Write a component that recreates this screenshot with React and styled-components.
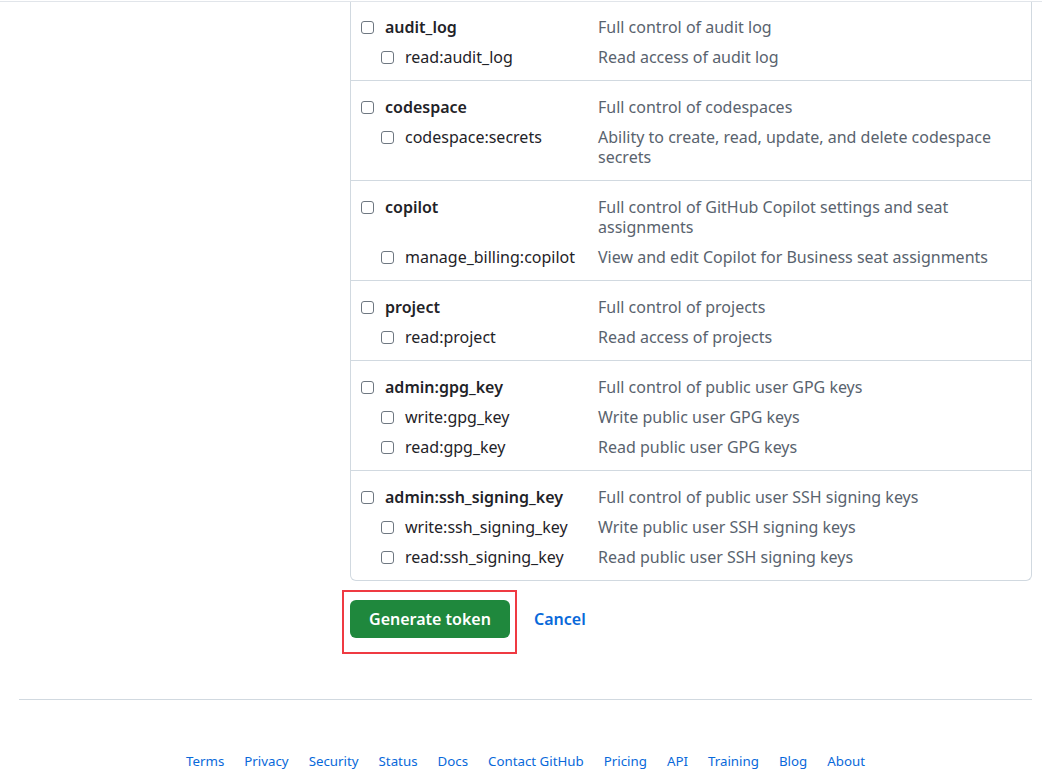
import React from 'react';
import styled, { createGlobalStyle } from 'styled-components';

const GlobalStyle = createGlobalStyle`
  html, body {
    margin: 0;
    padding: 0;
    background: #ffffff;
  }
  body {
    font-family: "Noto Sans", "Liberation Sans", Arial, sans-serif;
    color: #1f2328;
  }
`;

const Page = styled.div`
  width: 1042px;
  padding-top: 1px;
  box-sizing: border-box;
`;

const Rule = styled.div`
  border-top: 1px solid #e1e5ea;
`;

const Main = styled.div`
  padding: 0 10px 0 350px;
`;

const ScopeTable = styled.div`
  border: 1px solid #d1d9e0;
  border-top: none;
  border-radius: 0 0 6px 6px;
`;

const Section = styled.div`
  padding: ${(p) => (p.$first ? '10px' : '11px')} 20px 8px 10px;
  border-top: ${(p) => (p.$first ? 'none' : '1px solid #d1d9e0')};
`;

const Row = styled.div`
  display: grid;
  grid-template-columns: 237px 1fr;
  padding: 5px 0;
  font-size: 16px;
  line-height: 20px;
`;

const Label = styled.label`
  display: flex;
  align-items: flex-start;
  gap: 11px;
  padding-left: ${(p) => (p.$child ? '20px' : '0')};
  font-weight: ${(p) => (p.$child ? 400 : 600)};
  color: #1f2328;
  white-space: nowrap;
`;

const Check = styled.input.attrs({ type: 'checkbox' })`
  -webkit-appearance: none;
  appearance: none;
  box-sizing: border-box;
  margin: 4px 0 0 0;
  width: 13px;
  height: 13px;
  flex: none;
  border: 1px solid #6e7781;
  border-radius: 3px;
  background: #fff;
`;

const Desc = styled.div`
  color: #59636e;
`;

const Actions = styled.div`
  display: flex;
  align-items: center;
  gap: 24px;
  margin-top: 19px;
`;

const Highlight = styled.div`
  position: relative;
  &::after {
    content: '';
    position: absolute;
    left: -8px;
    right: -7px;
    top: -10px;
    bottom: -16px;
    border: 2px solid #ef3a42;
    pointer-events: none;
  }
`;

const PrimaryButton = styled.button`
  width: 160px;
  height: 38px;
  border: none;
  border-radius: 6px;
  background: #1f883d;
  color: #ffffff;
  font-family: inherit;
  font-size: 16px;
  font-weight: 600;
  cursor: pointer;
`;

const CancelLink = styled.a`
  color: #0969da;
  font-size: 16px;
  font-weight: 600;
  text-decoration: none;
`;

const Footer = styled.footer`
  margin: 61px 10px 0 19px;
  border-top: 1px solid #d1d9e0;
  padding: 52px 0 0;
  display: flex;
  justify-content: center;
  gap: 20px;
`;

const FooterLink = styled.a`
  color: #0969da;
  font-size: 13.3px;
  line-height: 18px;
  text-decoration: none;
`;

const scopes = [
  {
    name: 'audit_log',
    desc: 'Full control of audit log',
    children: [['read:audit_log', 'Read access of audit log']],
  },
  {
    name: 'codespace',
    desc: 'Full control of codespaces',
    children: [['codespace:secrets', 'Ability to create, read, update, and delete codespace secrets']],
  },
  {
    name: 'copilot',
    desc: 'Full control of GitHub Copilot settings and seat assignments',
    children: [['manage_billing:copilot', 'View and edit Copilot for Business seat assignments']],
  },
  {
    name: 'project',
    desc: 'Full control of projects',
    children: [['read:project', 'Read access of projects']],
  },
  {
    name: 'admin:gpg_key',
    desc: 'Full control of public user GPG keys',
    children: [
      ['write:gpg_key', 'Write public user GPG keys'],
      ['read:gpg_key', 'Read public user GPG keys'],
    ],
  },
  {
    name: 'admin:ssh_signing_key',
    desc: 'Full control of public user SSH signing keys',
    children: [
      ['write:ssh_signing_key', 'Write public user SSH signing keys'],
      ['read:ssh_signing_key', 'Read public user SSH signing keys'],
    ],
  },
];

const footerLinks = ['Terms', 'Privacy', 'Security', 'Status', 'Docs', 'Contact GitHub', 'Pricing', 'API', 'Training', 'Blog', 'About'];

export default function App() {
  return (
    <>
      <GlobalStyle />
      <Page>
        <Rule />
        <Main>
          <ScopeTable>
            {scopes.map((s, i) => (
              <Section key={s.name} $first={i === 0}>
                <Row>
                  <Label>
                    <Check />
                    {s.name}
                  </Label>
                  <Desc>{s.desc}</Desc>
                </Row>
                {s.children.map(([name, desc]) => (
                  <Row key={name}>
                    <Label $child>
                      <Check />
                      {name}
                    </Label>
                    <Desc>{desc}</Desc>
                  </Row>
                ))}
              </Section>
            ))}
          </ScopeTable>
          <Actions>
            <Highlight>
              <PrimaryButton type="submit">Generate token</PrimaryButton>
            </Highlight>
            <CancelLink href="#">Cancel</CancelLink>
          </Actions>
        </Main>
        <Footer>
          {footerLinks.map((l) => (
            <FooterLink key={l} href="#">{l}</FooterLink>
          ))}
        </Footer>
      </Page>
    </>
  );
}
